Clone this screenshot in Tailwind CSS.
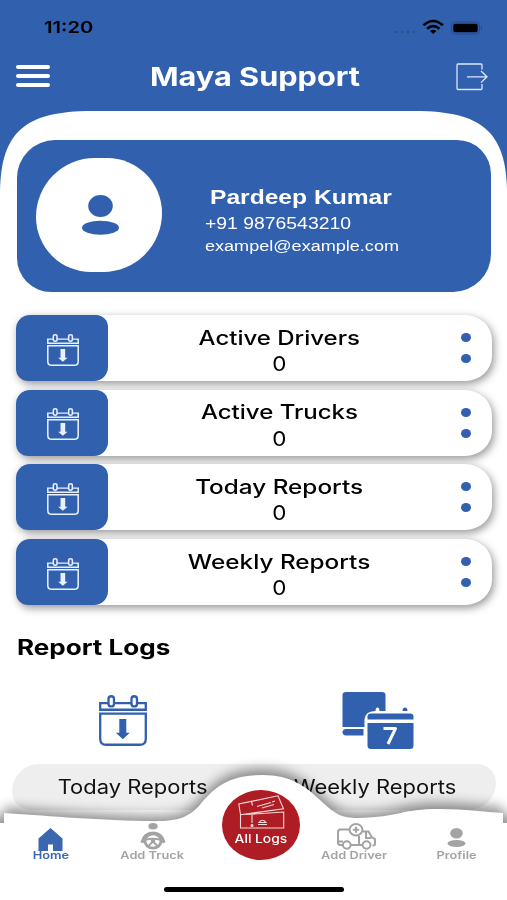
<!DOCTYPE html>
<html lang="en">
<head>
  <meta charset="UTF-8" />
  <meta name="viewport" content="width=device-width, initial-scale=1" />
  <title>Maya Support</title>
  <script src="https://cdn.jsdelivr.net/npm/@tailwindcss/browser@4"></script>
</head>
<body class="bg-white">
  <!-- Shared icon -->
  <svg class="hidden">
    <symbol id="calendar" viewBox="0 0 48 50" preserveAspectRatio="none">
      <g fill="none" stroke="currentColor" stroke-width="2.300">
        <path d="M9 8H1.200v6.500h45.600V8H38M15 8h18" />
        <rect x="9.500" y="1.200" width="5.500" height="10" rx="2.700" />
        <rect x="32.500" y="1.200" width="5.500" height="10" rx="2.700" />
        <path d="M1.200 18.200h45.600v24.600q0 6-6 6H7.200q-6 0-6-6z" />
      </g>
      <path d="M20.300 23.500h7V37h3.500l-7 6.500-7-6.500h3.500z" fill="currentColor" />
    </symbol>
  </svg>

  <div class="relative w-[507px] h-[900px] overflow-hidden bg-white font-['Inter',sans-serif] text-black">

    <!-- Header -->
    <header class="h-[190px] bg-[#3060ae]">
      <div class="flex items-center justify-between h-[53px] pl-[44px] pr-[24px]">
        <span class="inline-block origin-left scale-x-[1.22] mt-[1px] text-[16.500px] font-semibold">11:20</span>
        <svg width="90" height="20" viewBox="0 0 90 20">
          <g fill="#28508f">
            <circle cx="3" cy="15" r="1.300" /><circle cx="9" cy="15" r="1.300" />
            <circle cx="15" cy="15" r="1.300" /><circle cx="21" cy="15" r="1.300" />
          </g>
          <g fill="none" stroke="#000" stroke-width="2.600">
            <path d="M30.500 8.300q9.700-8.600 19.400 0" />
            <path d="M34 11.700q6.200-5.200 12.400 0" />
          </g>
          <path d="M37 14.100q3.200-2.600 6.400 0L40.200 16.900z" />
          <rect x="58.500" y="5" width="28" height="12" rx="3.500" fill="none" stroke="#244a87" />
          <rect x="60.300" y="6.700" width="24.400" height="8.600" rx="1.800" />
          <path d="M88 9q1.800 2 0 4z" fill="#1d3c70" />
        </svg>
      </div>
      <div class="flex items-center justify-between h-[46px] pl-[16px] pr-[18px]">
        <div class="flex flex-col gap-[4.800px] w-[34px]">
          <div class="h-[4px] rounded-full bg-white"></div>
          <div class="h-[4px] rounded-full bg-white"></div>
          <div class="h-[4px] rounded-full bg-white"></div>
        </div>
        <h1 class="inline-block ml-[4px] scale-x-[1.18] text-[26px] font-bold text-white">Maya Support</h1>
        <svg width="33" height="28" viewBox="0 0 33 28" fill="none" stroke="#dbe6f8" stroke-width="1.300" class="mt-[2px]">
          <path d="M26 6.500V2q0-1-1-1H2Q1 1 1 2v23.500q0 1 1 1h23q1 0 1-1V21" />
          <path d="M11 13.800h20M25 8l6 5.800-6 5.800" />
        </svg>
      </div>
      <svg class="block mt-[11.500px]" width="507" height="80" viewBox="0 0 507 80">
        <path fill="#fff" d="M0 80C1 22 24 0 92 0H415C483 0 506 22 507 80z" />
      </svg>
    </header>

    <main class="relative -mt-[50px]">
      <!-- Profile card -->
      <section class="mx-[16.500px] h-[152px] flex items-center pl-[19.500px] rounded-[38px_34px] bg-[#3060ae] text-white font-['Liberation_Sans',sans-serif]">
        <div class="w-[126px] h-[114px] mb-[2px] rounded-[60px_56px] bg-white flex items-center justify-center">
          <svg width="37" height="40" viewBox="0 0 37 40" fill="#3060ae" class="ml-[3px]">
            <ellipse cx="18.500" cy="11" rx="12.300" ry="11" />
            <ellipse cx="18.500" cy="32.700" rx="18.500" ry="7" />
          </svg>
        </div>
        <div class="ml-[43px] mt-[6px] flex flex-col items-start">
          <div class="ml-[4.500px] origin-left scale-x-[1.2] text-[20.500px] leading-[30px] font-bold">Pardeep Kumar</div>
          <div class="origin-left scale-x-[1.19] text-[16.300px] leading-[23px]">+91 9876543210</div>
          <div class="origin-left scale-x-[1.165] text-[15.500px] leading-[22px]">exampel@example.com</div>
        </div>
      </section>

      <!-- Counters -->
      <section class="mt-[23.300px] ml-[16px] mr-[15.500px] flex flex-col gap-[8.600px] text-[20px] leading-[26.200px]">
        <div class="h-[66px] flex rounded-l-[13px] rounded-r-[27px_25px] bg-white shadow-[2px_3px_8px_rgba(0,0,0,0.42)]">
          <div class="w-[91.500px] rounded-[14px_12px] bg-[#3060ae] text-[#e9f1ff] flex items-center justify-center">
            <svg width="32" height="32" class="ml-[3px] mt-[3px]"><use href="#calendar" /></svg>
          </div>
          <div class="flex-1 pt-[9.500px] pr-[9px] flex flex-col items-center">
            <span class="scale-x-[1.2] font-medium">Active Drivers</span>
            <span class="scale-x-[1.12]">0</span>
          </div>
          <div class="flex flex-col justify-center gap-[12px] pr-[21px]">
            <div class="w-[10px] h-[9px] rounded-[50%] bg-[#3060ae]"></div>
            <div class="w-[10px] h-[9px] rounded-[50%] bg-[#3060ae]"></div>
          </div>
        </div>
        <div class="h-[66px] flex rounded-l-[13px] rounded-r-[27px_25px] bg-white shadow-[2px_3px_8px_rgba(0,0,0,0.42)]">
          <div class="w-[91.500px] rounded-[14px_12px] bg-[#3060ae] text-[#e9f1ff] flex items-center justify-center">
            <svg width="32" height="32" class="ml-[3px] mt-[3px]"><use href="#calendar" /></svg>
          </div>
          <div class="flex-1 pt-[9.500px] pr-[9px] flex flex-col items-center">
            <span class="scale-x-[1.2] font-medium">Active Trucks</span>
            <span class="scale-x-[1.12]">0</span>
          </div>
          <div class="flex flex-col justify-center gap-[12px] pr-[21px]">
            <div class="w-[10px] h-[9px] rounded-[50%] bg-[#3060ae]"></div>
            <div class="w-[10px] h-[9px] rounded-[50%] bg-[#3060ae]"></div>
          </div>
        </div>
        <div class="h-[66px] flex rounded-l-[13px] rounded-r-[27px_25px] bg-white shadow-[2px_3px_8px_rgba(0,0,0,0.42)]">
          <div class="w-[91.500px] rounded-[14px_12px] bg-[#3060ae] text-[#e9f1ff] flex items-center justify-center">
            <svg width="32" height="32" class="ml-[3px] mt-[3px]"><use href="#calendar" /></svg>
          </div>
          <div class="flex-1 pt-[9.500px] pr-[9px] flex flex-col items-center">
            <span class="scale-x-[1.215] font-medium">Today Reports</span>
            <span class="scale-x-[1.12]">0</span>
          </div>
          <div class="flex flex-col justify-center gap-[12px] pr-[21px]">
            <div class="w-[10px] h-[9px] rounded-[50%] bg-[#3060ae]"></div>
            <div class="w-[10px] h-[9px] rounded-[50%] bg-[#3060ae]"></div>
          </div>
        </div>
        <div class="h-[66px] flex rounded-l-[13px] rounded-r-[27px_25px] bg-white shadow-[2px_3px_8px_rgba(0,0,0,0.42)]">
          <div class="w-[91.500px] rounded-[14px_12px] bg-[#3060ae] text-[#e9f1ff] flex items-center justify-center">
            <svg width="32" height="32" class="ml-[3px] mt-[3px]"><use href="#calendar" /></svg>
          </div>
          <div class="flex-1 pt-[9.500px] pr-[9px] flex flex-col items-center">
            <span class="scale-x-[1.215] font-medium">Weekly Reports</span>
            <span class="scale-x-[1.12]">0</span>
          </div>
          <div class="flex flex-col justify-center gap-[12px] pr-[21px]">
            <div class="w-[10px] h-[9px] rounded-[50%] bg-[#3060ae]"></div>
            <div class="w-[10px] h-[9px] rounded-[50%] bg-[#3060ae]"></div>
          </div>
        </div>
      </section>

      <!-- Report logs -->
      <section>
        <h2 class="mt-[27px] ml-[17px] inline-block origin-left scale-x-[1.24] text-[21px] leading-[32px] font-bold">Report Logs</h2>
        <div class="mt-[27px] h-[58px] flex items-start">
          <svg width="48" height="51" class="ml-[98.500px] mt-[4px] text-[#3060ae]"><use href="#calendar" /></svg>
          <svg width="72" height="58" viewBox="0 0 72 58" class="ml-[195.500px] mt-[.5px] text-[#3060ae]" fill="currentColor">
            <path d="M4 0h36q3.500 0 3.500 3v16h-6q0-3.500-2-3.500t-2 3.500q-11 0-11 10v6H.500V3q0-3 3.500-3z" />
            <path d="M4 37h17.500V43.500H4Q.5 43 .5 40.200T4 37z" />
            <path d="M29 21.500h39q3.500 0 3.500 3V27.500h-46v-3q0-3 3.500-3zM60.500 19q0-3.500 2.500-3.500t2.500 3.500z" />
            <path d="M25.500 31h46v22.500q0 3.500-3.500 3.500H29q-3.500 0-3.500-3.500z" />
            <path d="M41.500 36.500H53.500L46 52" fill="none" stroke="#fff" stroke-width="3" stroke-linejoin="round" />
          </svg>
        </div>
        <div class="mt-[15px] ml-[12px] mr-[11px] h-[46px] pt-[2px] grid grid-cols-2 items-center justify-items-center rounded-[34px_23px] bg-[#eee] text-[19.500px]">
          <span class="scale-x-[1.125] text-[#111]">Today Reports</span>
          <span class="scale-x-[1.125] text-[#111]">Weekly Reports</span>
        </div>
      </section>
    </main>

    <!-- Bottom navigation, overlaps the report strip -->
    <nav class="absolute inset-x-0 bottom-0 h-[130px] text-[#a3a3a3]">
      <svg class="absolute inset-0 overflow-visible drop-shadow-[0_-6px_6px_rgba(0,0,0,0.42)]" width="507" height="130" viewBox="0 0 507 130">
        <path fill="#fff" d="M4 43C40 45 90 50 145 51C178 52 187 48 199 36C212 20 226 5 262 5C292 5 306 17 320 30C336 45 342 48 358 48C400 47 400 39 440 39C465 39 485 42 503 43V53H540V150H-30V53H4z" />
      </svg>
      <div class="relative flex h-full">
        <div class="w-[102px] pt-[57.500px] flex flex-col items-center text-[#3b66b0]">
          <svg width="25" height="23" viewBox="0 0 25 23" fill="currentColor" class="-ml-[2px]">
            <path d="M12.500 0L24.500 10.500V23H15V16.500H10V23H.5V10.500z" />
          </svg>
          <span class="mt-[-.5px] scale-x-[1.22] text-[10.500px] leading-[12px] font-semibold">Home</span>
        </div>
        <div class="w-[101px] pt-[53px] flex flex-col items-center">
          <svg width="26" height="27" viewBox="0 0 26 27">
            <ellipse cx="13" cy="3.300" rx="4.600" ry="3.300" fill="currentColor" />
            <path d="M.5 19Q3 8.500 13 8.500T25.500 19Q24 21 20 19H6Q2 21 .5 19z" fill="currentColor" />
            <ellipse cx="13" cy="18" rx="8" ry="7.200" fill="#fff" stroke="currentColor" stroke-width="2.800" />
            <path d="M5 17q8-2.500 16 0M13 18.500l-5 5M13 18.500l5 5" fill="none" stroke="currentColor" stroke-width="1.800" />
            <ellipse cx="13" cy="18" rx="2.300" ry="2" fill="currentColor" />
          </svg>
          <span class="scale-x-[1.22] text-[10.500px] leading-[12px] font-semibold">Add Truck</span>
        </div>
        <div class="w-[116px] pt-[20px] flex flex-col items-center">
          <div class="w-[78px] h-[70px] pt-[5px] flex flex-col items-center rounded-[50%] bg-[#ae1c24] text-white">
            <svg width="47" height="34" viewBox="0 0 47 34" fill="none" stroke="#f6dada" stroke-width="1.100">
              <path d="M2.500 19.500L.8 9 40 .8l5.500 13L2.500 19.800V33h43.200V17L8 19.500" />
              <path d="M13.500 6.500l1 4M19 11.500l14-4M24 13l12-3.500M34 7l3-1M14 20v8" />
              <path d="M21 27.500q3.500-4.500 7 0zM20 29.500h9" />
              <circle cx="14" cy="30.500" r="1" fill="#f6dada" />
            </svg>
            <span class="mt-[3px] scale-x-[1.2] text-[11.500px] leading-[14px] font-medium">All Logs</span>
          </div>
        </div>
        <div class="w-[71px] pt-[53px] flex flex-col items-center">
          <svg width="39" height="27" viewBox="0 0 39 27" fill="none" stroke="currentColor" stroke-width="2" class="ml-[4px]">
            <path d="M12 6.500H3.500Q1 6.500 1 9v11q0 2 2.500 2H6M13.500 22H25M22 13v9M26 8.500h5.500l3.500 6 3 1.500v5q0 1.500-2.500 1.500M29 9.500v5.500h5M2 18.500h4" />
            <ellipse cx="19" cy="6.700" rx="6.500" ry="5.700" />
            <path d="M19 3.700v6M15.800 6.700h6.400" />
            <ellipse cx="9.800" cy="22" rx="3.900" ry="3.700" />
            <ellipse cx="29.500" cy="22" rx="3.900" ry="3.700" />
          </svg>
          <span class="scale-x-[1.22] text-[10.500px] leading-[12px] font-semibold whitespace-nowrap">Add Driver</span>
        </div>
        <div class="flex-1 pl-[15px] pt-[58px] flex flex-col items-center">
          <svg width="19" height="19" viewBox="0 0 19 19" fill="currentColor">
            <ellipse cx="9.500" cy="5.300" rx="6.300" ry="5.300" />
            <ellipse cx="9.500" cy="15.500" rx="9" ry="3.400" />
          </svg>
          <span class="mt-[3px] scale-x-[1.22] text-[10.500px] leading-[12px] font-semibold">Profile</span>
        </div>
      </div>
      <div class="absolute bottom-[8.500px] left-[164px] w-[180px] h-[5px] rounded-full bg-black"></div>
    </nav>
  </div>
</body>
</html>
